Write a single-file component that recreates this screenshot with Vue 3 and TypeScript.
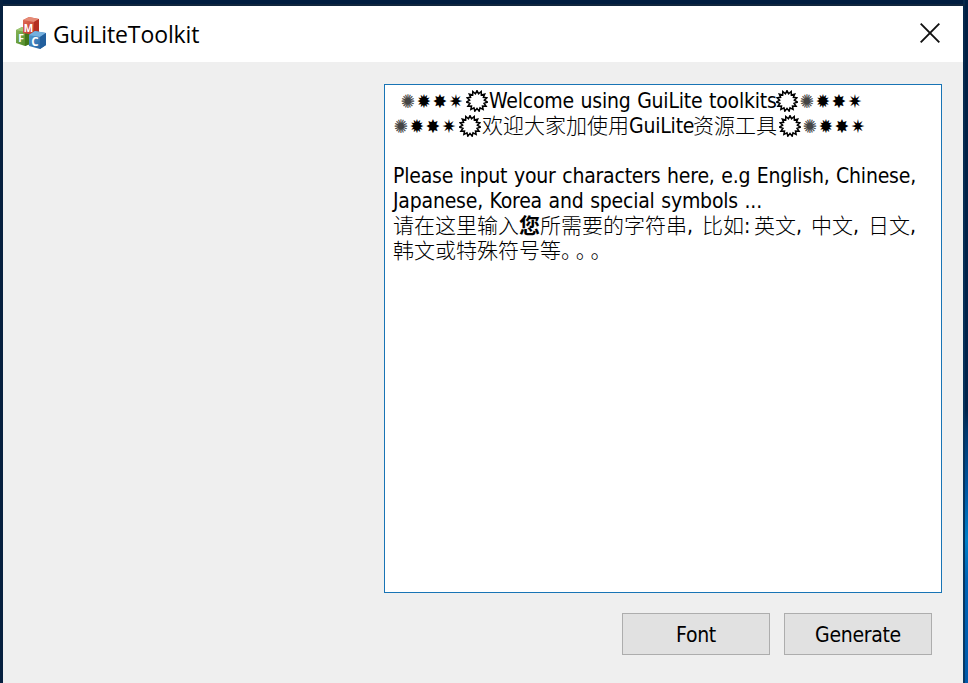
<script setup lang="ts">
type RunKind = 'latin' | 'cjk' | 'bold' | 'stops' | 'stars' | 'gear'

interface Run {
  kind: RunKind
  text: string
  width: number
}

const stars = '✺✹✸✷'
const latin = (text: string, width: number): Run => ({ kind: 'latin', text, width })
const cjk = (text: string, width = text.length * 21): Run => ({ kind: 'cjk', text, width })
const starRun: Run = { kind: 'stars', text: stars, width: 64 }
const gear: Run = { kind: 'gear', text: '', width: 25 }

const lines: Run[][] = [
  [latin(' ', 7), starRun, gear, latin('Welcome using GuiLite toolkits', 285), gear, starRun],
  [starRun, gear, cjk('欢迎大家加使用'), latin('GuiLite', 64), cjk('资源工具'), gear, starRun],
  [],
  [latin('Please input your characters here, e.g English, Chinese,', 525)],
  [latin('Japanese, Korea and special symbols ...', 371)],
  [
    cjk('请在这里输入'),
    { kind: 'bold', text: '您', width: 21 },
    cjk('所需要的字符串'),
    latin(',', 15),
    cjk('比如'),
    latin(':', 10),
    cjk('英文'),
    latin(',', 15),
    cjk('中文'),
    latin(',', 15),
    cjk('日文'),
    latin(',', 14),
  ],
  [cjk('韩文或特殊符号等'), { kind: 'stops', text: '。。。', width: 60 }],
]

// Zigzag outline of a fifteen-toothed cog in a 22px box.
const cogPoints = Array.from({ length: 30 }, (_, i) => {
  const radius = i % 2 === 0 ? 10.4 : 7.4
  const angle = (i * Math.PI) / 15 - Math.PI / 2
  return `${(11 + radius * Math.cos(angle)).toFixed(2)},${(11 + radius * Math.sin(angle)).toFixed(2)}`
}).join(' ')
</script>

<template>
  <div class="desktop">
    <main class="window">
      <header class="titlebar">
        <svg class="logo" viewBox="0 0 32 32">
          <defs>
            <linearGradient id="red" x2="1" y2="1"><stop stop-color="#e2705a" /><stop offset="1" stop-color="#b62a1d" /></linearGradient>
            <linearGradient id="green" x2="1" y2="1"><stop stop-color="#8ab85c" /><stop offset="1" stop-color="#46811d" /></linearGradient>
            <linearGradient id="blue" x2="1" y2="1"><stop stop-color="#5a9fd6" /><stop offset="1" stop-color="#1b5898" /></linearGradient>
          </defs>
          <path d="M1 13 7 10 15 12V27L10 29 1 26Z" fill="url(#green)" />
          <path d="M1 13 7 10 15 12 10 15Z" fill="#a0c878" />
          <path d="M10 15 15 12V27L10 29Z" fill="#417719" />
          <path d="M8 3 14 0 24 2V15L19 18 8 16Z" fill="url(#red)" />
          <path d="M8 3 14 0 24 2 19 5Z" fill="#e58a76" />
          <path d="M19 5 24 2V15L19 18Z" fill="#b52e20" />
          <path d="M14 18 20 14 31 16V28L25 32 14 29Z" fill="url(#blue)" />
          <path d="M14 18 20 14 31 16 25 20Z" fill="#74b0df" />
          <path d="M25 20 31 16V28L25 32Z" fill="#225f9d" />
          <text x="8.8" y="14.6" font-size="10">M</text>
          <text x="3.2" y="24.5" font-size="10.5">F</text>
          <text x="16.3" y="28.5" font-size="11.5">C</text>
        </svg>
        <h1 class="title">GuiLiteToolkit</h1>
        <svg class="close" viewBox="0 0 20 20"><path d="M.7.7 19.3 19.3M19.3.7.7 19.3" /></svg>
      </header>
      <section class="body">
        <div class="editor">
          <div v-for="(line, i) in lines" :key="i" class="line">
            <span v-for="(run, j) in line" :key="j" class="run" :class="run.kind" :style="{ width: run.width + 'px' }">
              <svg v-if="run.kind === 'gear'" class="cog" viewBox="0 0 22 22">
                <polygon :points="cogPoints" />
              </svg>
              <template v-else-if="run.kind === 'stars'">
                <span v-for="star in run.text" :key="star" class="star">{{ star }}</span>
              </template>
              <template v-else>{{ run.text }}</template>
            </span>
          </div>
        </div>
        <div class="actions">
          <button class="button" type="button">Font</button>
          <button class="button" type="button">Generate</button>
        </div>
      </section>
    </main>
  </div>
</template>

<style>
body {
  overflow: hidden;
}
</style>

<style scoped>
.desktop {
  box-sizing: border-box;
  width: 968px;
  height: 683px;
  padding: 6px 5px 0 3px;
  background:
    linear-gradient(#06203f, #06203f) left / 3px 100% no-repeat,
    linear-gradient(#10263e, #10263e) 0 4px / 965px 2px no-repeat,
    linear-gradient(#06284b, #073966) 963px 0 / 2px 100% no-repeat,
    linear-gradient(#001f43 0, #00234b 60%, #00366c 63%, #0058a4 72%, #0080c9 79%, #0063b5 85%, #0059aa 100%) right / 3px 100% no-repeat,
    #001d40;
}
.window {
  width: 960px;
  height: 677px;
  background: #efefef;
}
.titlebar {
  box-sizing: border-box;
  display: flex;
  align-items: center;
  height: 56px;
  padding: 0 23px 2px 12px;
  background: #fff;
}
.logo {
  width: 32px;
  height: 32px;
}
.logo text {
  fill: #fff;
  font-family: "Open Sans", sans-serif;
  font-weight: 700;
}
.title {
  margin: 1px 0 0 6px;
  color: #000;
  font: 400 23px/32px "Open Sans", sans-serif;
  letter-spacing: -0.1px;
}
.close {
  width: 20px;
  height: 20px;
  margin-left: auto;
}
.close path {
  fill: none;
  stroke: #111;
  stroke-width: 1.9;
}
.body {
  display: flex;
  flex-direction: column;
  align-items: flex-end;
  padding: 22px 21px 0 0;
}
.editor {
  box-sizing: border-box;
  width: 558px;
  height: 509px;
  padding: 3px 8px;
  border: 1px solid #1874b5;
  background: #fff;
  color: #000;
  font: 21px/25px "DejaVu Sans Condensed", "DejaVu Sans", sans-serif;
  font-stretch: condensed;
}
.line {
  display: flex;
  height: 25px;
}
.run {
  flex: none;
  white-space: pre;
}
.latin {
  line-height: 27px;
  letter-spacing: -0.2px;
  word-spacing: 0.8px;
}
.cjk,
.bold,
.stops {
  font-family: "Noto Sans CJK SC", sans-serif;
  font-weight: 300;
  font-stretch: normal;
  line-height: 23px;
}
.bold {
  font-weight: 700;
}
.stops {
  letter-spacing: -6.3px;
  font-feature-settings: "chws" 0, "halt" 0;
  text-spacing-trim: space-all;
}
.stars {
  display: flex;
  font-size: 19px;
  line-height: 26px;
}
.star {
  display: flex;
  justify-content: center;
  width: 16px;
}
.star:first-child {
  color: #444;
}
.gear {
  display: flex;
  align-items: center;
  justify-content: center;
}
.cog {
  width: 22px;
  height: 22px;
}
.cog polygon {
  fill: none;
  stroke: #000;
  stroke-width: 1.5;
}
.actions {
  display: flex;
  gap: 14px;
  margin: 20px 10px 0 0;
}
.button {
  box-sizing: border-box;
  width: 148px;
  height: 42px;
  padding: 2px 0 0;
  border: 1px solid #adadad;
  border-radius: 0;
  background: #e1e1e1;
  color: #000;
  font: 21px/25px "DejaVu Sans Condensed", "DejaVu Sans", sans-serif;
  font-stretch: condensed;
  letter-spacing: -0.3px;
}
</style>
